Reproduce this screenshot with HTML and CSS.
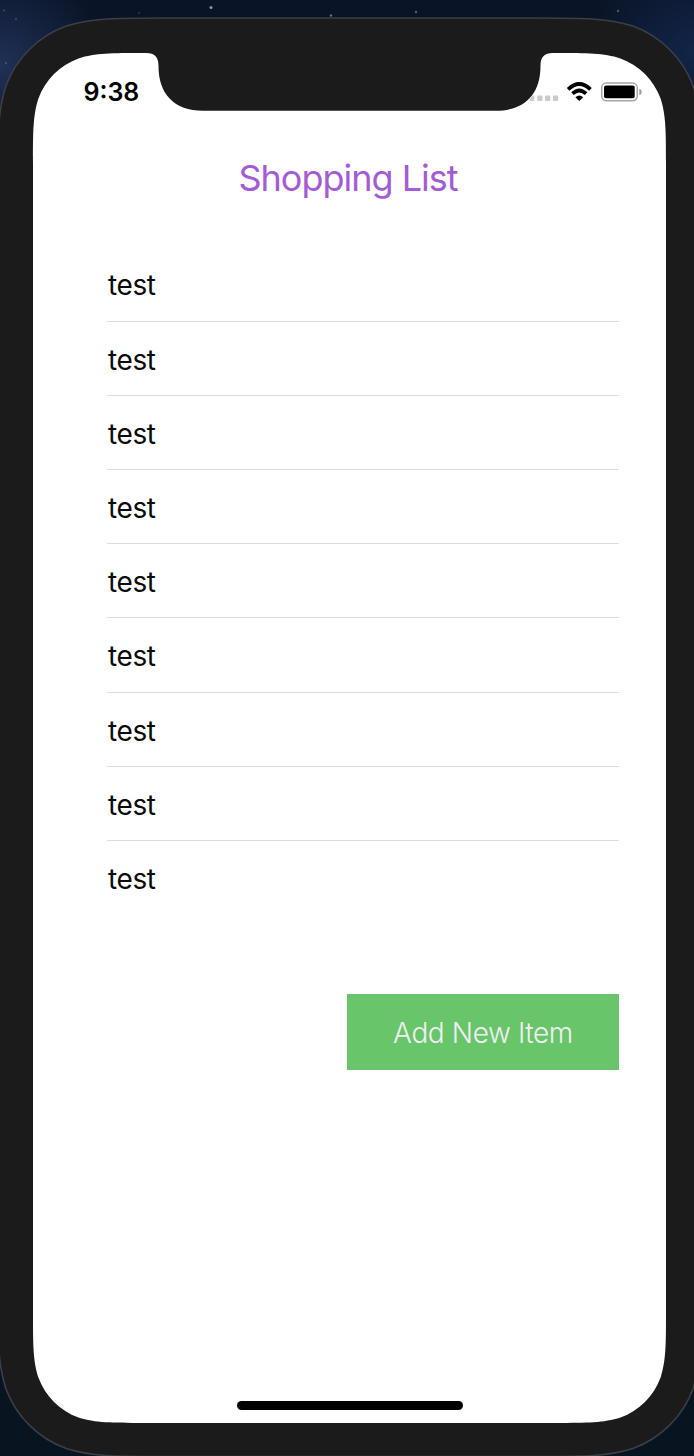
FILE: index.html
```
<!DOCTYPE html>
<html lang="en">
<head>
<meta charset="utf-8">
<title>Shopping List</title>
<link rel="stylesheet" href="styles.css">
</head>
<body>
<div class="desktop">
  <svg class="device" width="694" height="1456" viewBox="0 0 694 1456" aria-hidden="true">
    <g fill="#8d969c">
      <circle cx="211" cy="7.500" r="1.500"/><circle cx="331" cy="15.500" r="1.200" opacity=".7"/><circle cx="416" cy="12" r="1.200" opacity=".6"/><circle cx="618" cy="11" r="1.200" opacity=".5"/>
      <circle cx="4" cy="10.500" r="1" opacity=".4"/><circle cx="16" cy="19" r="1" opacity=".4"/><circle cx="6" cy="63" r="1" opacity=".4"/><circle cx="139" cy="13" r="1" opacity=".3"/>
    </g>
    <path transform="translate(-1.750 0) scale(1.005 1)" fill="#1b1b1b" stroke="#3b3f46" stroke-width="1.600" d="M164.500 18H534.500C582 18 605.800 18 631.400 26.100C659.300 36.300 681.300 58.300 691.500 86.200C699.600 111.800 699.600 135.600 699.600 183V1291.500C699.600 1339 699.600 1362.800 691.500 1388.400C681.300 1416.300 659.300 1438.300 631.400 1448.500C605.800 1456.600 582 1456.600 534.500 1456.600H164.500C117 1456.600 93.200 1456.600 67.600 1448.500C39.700 1438.300 17.700 1416.300 7.500 1388.400C-.6 1362.800 -.6 1339 -.6 1291.500V183C-.6 135.600 -.6 111.800 7.500 86.200C17.700 58.300 39.700 36.300 67.600 26.100C93.200 18 117 18 164.500 18Z"/>
    <path fill="#fff" d="M143.100 53H146C155 53 158.500 57 158.500 66C158.500 94 174 110.700 203 110.700H496C525 110.700 540.500 94 540.500 66C540.500 57 544 53 553 53H555.900C587.600 53 603.500 53 620.500 58.400C639.200 65.200 653.800 79.800 660.600 98.500C666 115.500 666 131.400 666 163.100V1312.900C666 1344.600 666 1360.500 660.600 1377.500C653.800 1396.200 639.200 1410.800 620.500 1417.600C603.500 1423 587.600 1423 555.900 1423H143.100C111.400 1423 95.500 1423 78.500 1417.600C59.800 1410.800 45.200 1396.200 38.400 1377.500C33 1360.500 33 1344.600 33 1312.900V163.100C33 131.400 33 115.500 38.400 98.500C45.200 79.800 59.800 65.200 78.500 58.400C95.500 53 111.400 53 143.100 53Z"/>
  </svg>
  <main class="screen">
    <header class="status">
      <time class="clock">9:38</time>
      <svg class="indicators" width="114" height="24" viewBox="529 80 114 24" aria-label="Network and battery">
        <path fill="#cbcbcb" d="M534.200 95.500V101H530.500L529.300 100L532 96Z"/>
        <g fill="#cbcbcb"><rect x="537.200" y="95.500" width="5.300" height="5.500" rx="1.300"/><rect x="545" y="95.500" width="5.300" height="5.500" rx="1.300"/><rect x="552.900" y="95.500" width="5.300" height="5.500" rx="1.300"/></g>
        <g fill="none" stroke="#000" stroke-width="3.700"><path d="M568.100 89.300Q579.300 78.600 590.500 89.300"/><path d="M572.500 93.700Q579.300 87.300 586.100 93.700"/></g>
        <path d="M575.400 97.200Q579.300 93.700 583.200 97.200L579.300 101Z"/>
        <rect x="601.700" y="83" width="35.600" height="17.800" rx="4.800" fill="#fff" stroke="#a4a4a4" stroke-width="1.500"/>
        <rect x="604" y="85.500" width="30.700" height="12.700" rx="2"/>
        <path fill="#a0a0a0" d="M639.300 88.700C642.500 89.500 642.500 94.500 639.300 95.300Z"/>
      </svg>
    </header>
    <h1 class="title">Shopping List</h1>
    <ul class="list">
      <li>test</li><li>test</li><li>test</li><li>test</li><li>test</li><li>test</li><li>test</li><li>test</li><li>test</li>
    </ul>
    <button class="add">Add New Item</button>
    <div class="home"></div>
  </main>
</div>
</body>
</html>
```
FILE: styles.css
```
* { box-sizing: border-box; }
body { margin: 0; font-family: Inter, "Liberation Sans", sans-serif; }
.desktop {
  position: relative;
  width: 694px;
  height: 1456px;
  padding: 53px 28px 33px 33px;
  overflow: hidden;
  background:
    radial-gradient(ellipse 110px 100px at 0 65px, #203158, transparent),
    radial-gradient(ellipse 110px 90px at 694px 50px, #122549, transparent),
    linear-gradient(#0a1427, #08111f 120px, #091421);
}
.device { position: absolute; inset: 0; display: block; }
.screen {
  position: relative;
  display: flex;
  flex-direction: column;
  height: 1370px;
}
.status {
  display: flex;
  justify-content: space-between;
  align-items: flex-start;
  height: 94px;
  padding: 27px 23px 0 50.500px;
}
.clock { font-size: 25px; line-height: 24px; font-weight: 600; letter-spacing: 0; }
.indicators { display: block; }
.title {
  margin: 0;
  padding-right: 3px;
  height: 63px;
  line-height: 63px;
  text-align: center;
  font-size: 36px;
  font-weight: 400;
  letter-spacing: -1px;
  color: #a45bd8;
}
.list {
  list-style: none;
  margin: 37.400px 47px 0 74px;
  padding: 0;
}
.list li {
  height: 74.200px;
  padding-left: 1px;
  line-height: 76px;
  font-size: 28px;
  letter-spacing: -.4px;
  color: #0b0b0b;
  border-bottom: 1px solid #dcdcdc;
}
.list li:last-child { border-bottom: 0; }
.add {
  align-self: flex-end;
  width: 272px;
  height: 76px;
  margin: 79.100px 47px 0 0;
  padding: 2px 0 0;
  border: 0;
  background: #68c56a;
  color: #f0f0f3;
  font: 350 28px Inter, sans-serif;
  letter-spacing: -.4px;
}
.home {
  align-self: center;
  width: 226px;
  height: 9px;
  margin: auto 0 13px;
  border-radius: 5px;
  background: #000;
}
```
